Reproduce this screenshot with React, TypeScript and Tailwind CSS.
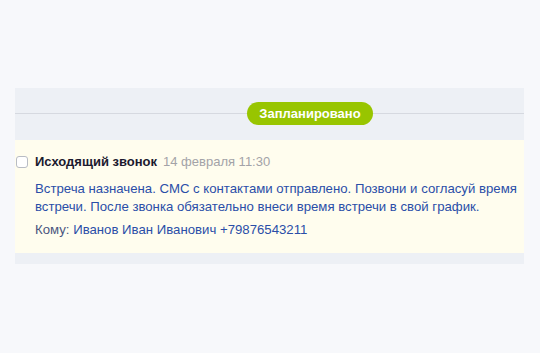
export default function App() {
  return (
    <div className="w-[540px] h-[353px] bg-[#f7f8fb] pt-[88px] pl-[15px] pr-[16px]" style={{ fontFamily: '"Liberation Sans", Arial, sans-serif' }}>
      <div className="bg-[#edf0f5]">
        <div className="relative h-[52px]">
          <div className="absolute left-0 right-0 top-[25px] h-px bg-[#d6d9e0]" />
          <div className="absolute left-[232px] top-[14px] h-[23px] w-[126px] rounded-full bg-[#98c500] flex items-center justify-center text-white font-bold text-[13px]">
            Запланировано
          </div>
        </div>
        <div className="bg-[#fffdee] pt-[12px] pb-[14px]">
          <div className="flex items-center">
            <div className="ml-[1px] w-[12px] h-[12px] rounded-[3px] border border-[#b8bcc4] bg-white" />
            <span className="ml-[7px] font-bold text-[13px] text-[#1b1a2e]">Исходящий звонок</span>
            <span className="ml-[6px] text-[13px] text-[#a3a3a8]">14 февраля 11:30</span>
          </div>
          <div className="pl-[20px] pr-[4px] mt-[8px] text-[13.2px] leading-[18px] text-[#2a4ea8]">
            Встреча назначена. СМС с контактами отправлено. Позвони и согласуй время встречи. После звонка обязательно внеси время встречи в свой график.
          </div>
          <div className="pl-[20px] mt-[5px] text-[13.2px] leading-[18px] text-[#2a4ea8]">
            <span className="text-[#4a5580]">Кому: </span>Иванов Иван Иванович +79876543211
          </div>
        </div>
        <div className="h-[11px]" />
      </div>
    </div>
  );
}
